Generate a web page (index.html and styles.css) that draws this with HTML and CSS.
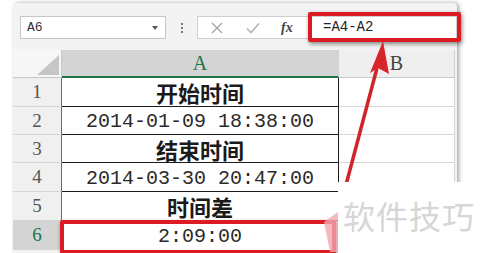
FILE: index.html
```html
<!DOCTYPE html>
<html lang="zh-CN">
<head>
    <meta charset="UTF-8">
    <title>时间差</title>
    <link rel="stylesheet" href="styles.css">
</head>
<body>
    <div class="window">
        <!-- name box + formula bar -->
        <div class="toolbar">
            <div class="name-box">
                <span>A6</span>
                <span class="caret"></span>
            </div>
            <div class="dots"><i></i><i></i><i></i></div>
            <div class="fx-bar">
                <div class="fx-buttons">
                    <svg class="btn" width="12" height="12" viewBox="0 0 12 12"><path d="M1 1 L11 11 M11 1 L1 11" stroke="#a8a8a8" stroke-width="1.4" fill="none"/></svg>
                    <svg class="btn" width="14" height="12" viewBox="0 0 14 12"><path d="M1 6.5 L5 10.5 L13 1.5" stroke="#b4b4b4" stroke-width="1.6" fill="none"/></svg>
                    <span class="fx">fx</span>
                </div>
                <div class="formula">=A4-A2</div>
            </div>
        </div>

        <!-- grid -->
        <div class="sheet">
            <div class="corner"><span class="tri"></span></div>
            <div class="col-head selected">A</div>
            <div class="col-head">B</div>

            <div class="row-head">1</div>
            <div class="cell title">开始时间</div>
            <div class="cell empty"></div>

            <div class="row-head">2</div>
            <div class="cell value">2014-01-09 18:38:00</div>
            <div class="cell empty"></div>

            <div class="row-head">3</div>
            <div class="cell title">结束时间</div>
            <div class="cell empty"></div>

            <div class="row-head">4</div>
            <div class="cell value">2014-03-30 20:47:00</div>
            <div class="cell empty"></div>

            <div class="row-head">5</div>
            <div class="cell title">时间差</div>
            <div class="cell empty"></div>

            <div class="row-head active">6</div>
            <div class="cell value last">2:09:00</div>
            <div class="cell empty last"></div>
        </div>
    </div>

    <!-- annotations drawn over the screenshot -->
    <div class="mark mark-formula"></div>
    <div class="mark mark-cell"></div>
    <svg class="arrow" width="483" height="253" viewBox="0 0 483 253">
        <path d="M342 200 L377 68" stroke="#d0242a" stroke-width="3.5" fill="none"/>
        <path d="M383 41 L370 73 L378 68 L389 74 Z" fill="#d8242b"/>
        <path d="M324 222 L338 212 L338 252 L330 252 Z" fill="#f0a8ae" opacity="0.8"/>
    </svg>
    <div class="watermark">软件技巧</div>
</body>
</html>
```

FILE: styles.css
```css
body {
    margin: 0;
    width: 483px;
    height: 253px;
    overflow: hidden;
    background-color: #ffffff;
    font-family: 'Liberation Serif', serif;
    position: relative;
}

.window {
    margin: 3px 0 0 13px;
    width: 444px;
    height: 260px;
    background-color: #f3f3f3;
    border-radius: 4px 4px 0 0;
    box-shadow: 2px 0 4px rgba(0, 0, 0, 0.35);
}

/* toolbar */
.toolbar {
    display: flex;
    align-items: flex-start;
    height: 47px;
    padding: 13px 0 0 7px;
    box-sizing: border-box;
}

.name-box {
    width: 146px;
    height: 23px;
    box-sizing: border-box;
    background-color: #ffffff;
    border: 1px solid #c6c6c6;
    display: flex;
    align-items: center;
    justify-content: space-between;
    padding: 0 7px 0 6px;
    font-family: 'Liberation Mono', monospace;
    font-size: 13px;
    color: #333;
}

.caret {
    width: 0;
    height: 0;
    border-left: 3.5px solid transparent;
    border-right: 3.5px solid transparent;
    border-top: 4px solid #555;
}

.dots {
    width: 31px;
    height: 23px;
    display: flex;
    flex-direction: column;
    align-items: center;
    justify-content: center;
    gap: 2px;
}

.dots i {
    width: 2px;
    height: 2px;
    background-color: #777;
}

.fx-bar {
    flex: 1;
    display: flex;
    height: 23px;
}

.fx-buttons {
    width: 111px;
    box-sizing: border-box;
    height: 23px;
    background-color: #ffffff;
    border: 1px solid #d0d0d0;
    border-right: none;
    display: flex;
    align-items: center;
    padding-left: 13px;
    gap: 23px;
}

.fx {
    font-style: italic;
    font-weight: bold;
    font-size: 14px;
    color: #444;
    margin-left: -2px;
}

.formula {
    flex: 1;
    background-color: #ffffff;
    border: 1px solid #d0d0d0;
    font-family: 'Liberation Mono', monospace;
    font-size: 14px;
    color: #222;
    line-height: 21px;
    padding-left: 14px;
}

/* sheet grid */
.sheet {
    display: grid;
    grid-template-columns: 49px 277px 116px;
    grid-template-rows: 28px 29px 28px 28px 29px 29px 29px;
}

.corner {
    background-color: #f6f6f6;
    border-right: 1px solid #c8c8c8;
    border-bottom: 1px solid #c8c8c8;
    position: relative;
}

.tri {
    position: absolute;
    right: 2px;
    bottom: 2px;
    width: 0;
    height: 0;
    border-left: 22px solid transparent;
    border-bottom: 20px solid #c6c6c6;
}

.col-head {
    background-color: #efefef;
    border-right: 1px solid #d0d0d0;
    border-bottom: 1px solid #c8c8c8;
    display: flex;
    align-items: center;
    justify-content: center;
    font-size: 20px;
    color: #444;
}

.col-head.selected {
    background-color: #d4d4d4;
    border-bottom: 2px solid #217346;
    color: #217346;
}

.row-head {
    background-color: #f0f0f0;
    border-right: 1px solid #6a6a6a;
    border-bottom: 1px solid #d6d6d6;
    display: flex;
    align-items: center;
    justify-content: center;
    font-size: 19px;
    color: #555;
}

.row-head.active {
    background-color: #d4d4d4;
    color: #217346;
}

.cell {
    background-color: #ffffff;
    display: flex;
    align-items: center;
    justify-content: center;
    border-bottom: 1px solid #1a1a1a;
    border-right: 1px solid #1a1a1a;
    color: #1a1a1a;
}

.cell.empty {
    border-bottom: 1px solid #d6d6d6;
    border-right: 1px solid #d6d6d6;
}

.cell.last {
    border-bottom: none;
}

.title {
    font-family: 'Noto Sans CJK SC', sans-serif;
    font-weight: bold;
    font-size: 22px;
}

.value {
    font-family: 'Liberation Mono', monospace;
    font-size: 20px;
    color: #2a2a2a;
    padding-top: 2px;
}

/* annotations */
.mark {
    position: absolute;
    border: 4px solid #dc1c22;
    box-shadow: 1px 2px 4px rgba(0, 0, 0, 0.45);
    border-radius: 2px;
}

.mark-formula {
    left: 308px;
    top: 12px;
    width: 145px;
    height: 22px;
}

.mark-cell {
    left: 60px;
    top: 220px;
    width: 268px;
    height: 26px;
}

.arrow {
    position: absolute;
    left: 0;
    top: 0;
}

.watermark {
    position: absolute;
    left: 338px;
    top: 182px;
    width: 145px;
    height: 71px;
    background-color: #ffffff;
    font-family: 'Noto Sans CJK SC', sans-serif;
    font-size: 32px;
    color: #d6d6d6;
    padding: 10px 0 0 5px;
    box-sizing: border-box;
    letter-spacing: 1px;
}
```
